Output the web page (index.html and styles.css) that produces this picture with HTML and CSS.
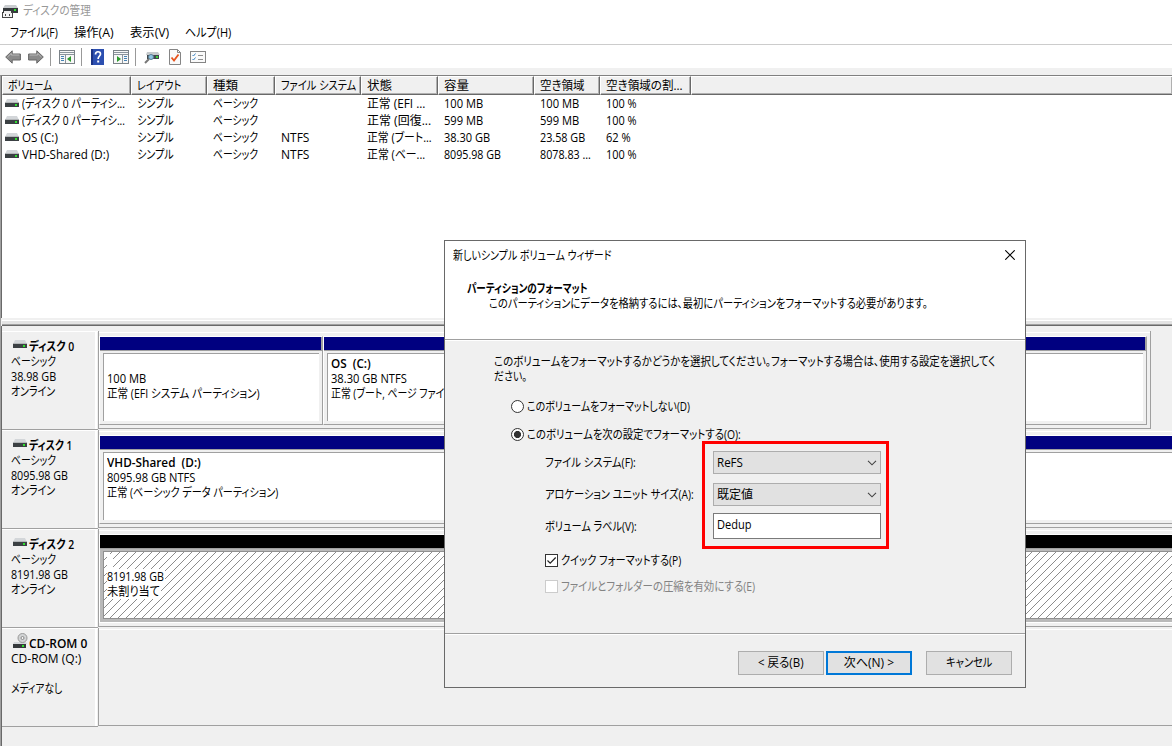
FILE: index.html
```
<!DOCTYPE html>
<html lang="ja">
<head>
    <meta charset="UTF-8">
    <title>ディスクの管理</title>
    <link rel="stylesheet" href="styles.css">
</head>
<body>
    <svg class="defs" width="0" height="0">
        <symbol id="drive" viewBox="0 0 14 8">
            <path d="M2 0h10l2 4H0z" fill="#d3d6d9"/>
            <rect y="3" width="14" height="1" fill="#b4b7b9"/>
            <rect y="4" width="14" height="4" fill="#3b4043"/>
            <rect x="10" y="5" width="2" height="2" fill="#2fe02f"/>
        </symbol>
        <symbol id="arrow" viewBox="0 0 16 14">
            <path d="M.7 7 7.2.8V4h8.2v6H7.2v3.2z" fill="#8b8b8b" stroke="#666"/>
            <path d="M2.5 7 6.3 3.4V5h8" fill="none" stroke="#b9b9b9"/>
        </symbol>
        <symbol id="chevron" viewBox="0 0 10 6">
            <path d="M1 .8l4 4 4-4" fill="none" stroke="#444" stroke-width="1.1"/>
        </symbol>
    </svg>

    <div class="titlebar">
        <svg width="16" height="16" viewBox="0 0 16 16">
            <path d="M3 2h11l2 3H1z" fill="#c9cccf"/>
            <rect x="1" y="5" width="15" height="5" fill="#35393c"/>
            <rect x="12" y="6" width="2" height="2" fill="#2fe02f"/>
            <rect x="0" y="9" width="11" height="6" fill="#444"/>
            <rect x="2" y="8" width="7" height="2" fill="#eee"/>
            <rect x="1" y="10" width="9" height="4" fill="#f4f4f4"/>
            <path d="M3 11h1v2H3zM7 11h1v2H7z" fill="#444"/>
        </svg>
        <span data-w="68">ディスクの管理</span>
    </div>
    <div class="menubar">
        <div class="menu menu-file"><span data-w="48">ファイル(F)</span></div>
        <div class="menu menu-action"><span data-w="40">操作(A)</span></div>
        <div class="menu menu-view"><span data-w="39">表示(V)</span></div>
        <div class="menu"><span data-w="46">ヘルプ(H)</span></div>
    </div>
    <div class="toolbar">
        <svg width="16" height="14"><use href="#arrow"/></svg>
        <svg class="forward" width="16" height="14"><use href="#arrow"/></svg>
        <i class="sep"></i>
        <svg class="tree" width="16" height="14" viewBox="0 0 16 14">
            <rect x=".5" y=".5" width="15" height="13" fill="#f7f7f7" stroke="#7b8288"/>
            <path d="M1 2.5h14M1 4.5h14M6.5 5v8" stroke="#8b949c"/>
            <path d="M2 6.5h3M2 8.5h3M2 10.5h3" stroke="#4682b4"/>
            <path d="M8 9l4-3v6z" fill="#2c9a2c"/>
        </svg>
        <i class="sep"></i>
        <svg class="help" width="13" height="16" viewBox="0 0 13 16">
            <rect width="13" height="16" fill="#2c4fb0"/>
            <rect width="2" height="16" fill="#1b3384"/>
            <path d="M4.5 5.5c0-3.6 5-3.6 5-.5 0 2-2.4 2.2-2.4 5" fill="none" stroke="#fff" stroke-width="1.7"/>
            <rect x="6.2" y="11.5" width="2" height="2" fill="#fff"/>
        </svg>
        <svg class="tree" width="16" height="14" viewBox="0 0 16 14">
            <rect x=".5" y=".5" width="15" height="13" fill="#f7f7f7" stroke="#7b8288"/>
            <path d="M1 2.5h14M1 4.5h14M9.5 5v8" stroke="#8b949c"/>
            <path d="M11 6.5h3M11 8.5h3M11 10.5h3" stroke="#4682b4"/>
            <path d="M4 6l4 3-4 3z" fill="#2c9a2c"/>
        </svg>
        <i class="sep"></i>
        <svg class="rescan" width="16" height="14" viewBox="0 0 16 14">
            <path d="M3 2h11l2 3H2z" fill="#c5c9cc"/>
            <rect x="3" y="5" width="12" height="4" fill="#41484c"/>
            <rect x="12" y="6" width="2" height="2" fill="#3cd03c"/>
            <circle cx="7" cy="7" r="2.5" fill="#8fc5e4" stroke="#5b7f96"/>
            <path d="M5 9l-4 4" stroke="#777" stroke-width="2"/>
        </svg>
        <svg class="page" width="12" height="16" viewBox="0 0 12 16">
            <path d="M.5.5h8l3 3v12H.5z" fill="#fafafa" stroke="#858585"/>
            <path d="M8.5.5v3h3" fill="none" stroke="#858585"/>
            <path d="M2.5 8.5l2.5 3 4.500-6" fill="none" stroke="#e8541d" stroke-width="1.8"/>
        </svg>
        <svg class="props" width="16" height="12" viewBox="0 0 16 12">
            <rect x=".5" y=".5" width="15" height="11" fill="#fafafa" stroke="#858585"/>
            <path d="M2.5 4l1 1 2-2.5M2.5 8l1 1 2-2.5" fill="none" stroke="#3e86c4"/>
            <path d="M8 4.5h5M8 8.5h5" stroke="#909090"/>
        </svg>
    </div>

    <div class="workspace">
        <div class="volumes">
            <div class="row head">
                <div class="c1"><span data-w="44">ボリューム</span></div>
                <div class="c2"><span data-w="44">レイアウト</span></div>
                <div class="c3"><span data-w="25">種類</span></div>
                <div class="c4"><span data-w="75">ファイル システム</span></div>
                <div class="c5"><span data-w="25">状態</span></div>
                <div class="c6"><span data-w="25">容量</span></div>
                <div class="c7"><span data-w="45">空き領域</span></div>
                <div class="c8"><span data-w="77">空き領域の割...</span></div>
                <div class="rest"></div>
            </div>
            <div class="rows">
                <div class="row">
                    <div class="c1"><svg width="14" height="8"><use href="#drive"/></svg><span data-w="103">(ディスク 0 パーティシ...</span></div>
                    <div class="c2"><span data-w="37">シンプル</span></div>
                    <div class="c3"><span data-w="45">ベーシック</span></div>
                    <div class="c4"></div>
                    <div class="c5"><span data-w="58">正常 (EFI ...</span></div>
                    <div class="c6"><span data-w="39">100 MB</span></div>
                    <div class="c7"><span data-w="39">100 MB</span></div>
                    <div class="c8"><span data-w="31">100 %</span></div>
                </div>
                <div class="row">
                    <div class="c1"><svg width="14" height="8"><use href="#drive"/></svg><span data-w="103">(ディスク 0 パーティシ...</span></div>
                    <div class="c2"><span data-w="37">シンプル</span></div>
                    <div class="c3"><span data-w="45">ベーシック</span></div>
                    <div class="c4"></div>
                    <div class="c5"><span data-w="64">正常 (回復...</span></div>
                    <div class="c6"><span data-w="39">599 MB</span></div>
                    <div class="c7"><span data-w="39">599 MB</span></div>
                    <div class="c8"><span data-w="31">100 %</span></div>
                </div>
                <div class="row">
                    <div class="c1"><svg width="14" height="8"><use href="#drive"/></svg><span data-w="36">OS (C:)</span></div>
                    <div class="c2"><span data-w="37">シンプル</span></div>
                    <div class="c3"><span data-w="45">ベーシック</span></div>
                    <div class="c4"><span data-w="28">NTFS</span></div>
                    <div class="c5"><span data-w="65">正常 (ブート...</span></div>
                    <div class="c6"><span data-w="46">38.30 GB</span></div>
                    <div class="c7"><span data-w="45">23.58 GB</span></div>
                    <div class="c8"><span data-w="25">62 %</span></div>
                </div>
                <div class="row">
                    <div class="c1"><svg width="14" height="8"><use href="#drive"/></svg><span data-w="87">VHD-Shared (D:)</span></div>
                    <div class="c2"><span data-w="37">シンプル</span></div>
                    <div class="c3"><span data-w="45">ベーシック</span></div>
                    <div class="c4"><span data-w="28">NTFS</span></div>
                    <div class="c5"><span data-w="58">正常 (ベー...</span></div>
                    <div class="c6"><span data-w="57">8095.98 GB</span></div>
                    <div class="c7"><span data-w="51">8078.83 ...</span></div>
                    <div class="c8"><span data-w="31">100 %</span></div>
                </div>
            </div>
        </div>
        <div class="splitter"></div>

        <div class="disks">
            <div class="disk">
                <div class="label">
                    <div class="name"><svg width="14" height="8"><use href="#drive"/></svg><b data-w="45">ディスク 0</b></div>
                    <div><span data-w="45">ベーシック</span></div>
                    <div><span data-w="45">38.98 GB</span></div>
                    <div><span data-w="44">オンライン</span></div>
                </div>
                <div class="frame closed">
                    <div class="part part-efi">
                        <div class="bar"></div>
                        <div class="body"><div class="box">
                            <div>&nbsp;</div>
                            <div><span data-w="39">100 MB</span></div>
                            <div><span data-w="153">正常 (EFI システム パーティション)</span></div>
                        </div></div>
                    </div>
                    <div class="part">
                        <div class="bar"></div>
                        <div class="body"><div class="box">
                            <div><b data-w="40">OS&nbsp; (C:)</b></div>
                            <div><span data-w="76">38.30 GB NTFS</span></div>
                            <div><span data-w="113">正常 (ブート, ページ ファイ</span></div>
                        </div></div>
                    </div>
                </div>
            </div>

            <div class="disk">
                <div class="label">
                    <div class="name"><svg width="14" height="8"><use href="#drive"/></svg><b data-w="43">ディスク 1</b></div>
                    <div><span data-w="45">ベーシック</span></div>
                    <div><span data-w="57">8095.98 GB</span></div>
                    <div><span data-w="44">オンライン</span></div>
                </div>
                <div class="frame">
                    <div class="part">
                        <div class="bar"></div>
                        <div class="body"><div class="box">
                            <div><b data-w="94">VHD-Shared&nbsp; (D:)</b></div>
                            <div><span data-w="88">8095.98 GB NTFS</span></div>
                            <div><span data-w="171">正常 (ベーシック データ パーティション)</span></div>
                        </div></div>
                    </div>
                </div>
            </div>

            <div class="disk">
                <div class="label">
                    <div class="name"><svg width="14" height="8"><use href="#drive"/></svg><b data-w="45">ディスク 2</b></div>
                    <div><span data-w="45">ベーシック</span></div>
                    <div><span data-w="57">8191.98 GB</span></div>
                    <div><span data-w="44">オンライン</span></div>
                </div>
                <div class="frame">
                    <div class="part free">
                        <div class="bar"></div>
                        <div class="body"><div class="box">
                            <svg class="hatch" width="100%" height="100%">
                                <pattern id="lines" width="8" height="8" patternUnits="userSpaceOnUse">
                                    <path d="M0 8L8 0" stroke="#8c8c8c" shape-rendering="crispEdges"/>
                                </pattern>
                                <rect width="100%" height="100%" fill="url(#lines)"/>
                            </svg>
                            <div class="note note-blank"></div>
                            <div class="note note-size"><span data-w="57">8191.98 GB</span></div>
                            <div class="note note-state"><span data-w="53">未割り当て</span></div>
                        </div></div>
                    </div>
                </div>
            </div>

            <div class="disk">
                <div class="label">
                    <div class="name cd">
                        <svg width="15" height="15" viewBox="0 0 15 15">
                            <path d="M1 9h12l1 2H0z" fill="#d3d6d9"/>
                            <rect y="11" width="13" height="4" fill="#35393c"/>
                            <rect x="9" y="12" width="2" height="2" fill="#2fe02f"/>
                            <circle cx="9.5" cy="5" r="4.5" fill="#d2d4d5" stroke="#999"/>
                            <circle cx="9.5" cy="5" r="1.5" fill="#f6f6f6" stroke="#888"/>
                        </svg>
                        <b data-w="58">CD-ROM 0</b>
                    </div>
                    <div><span data-w="70">CD-ROM (Q:)</span></div>
                    <div>&nbsp;</div>
                    <div><span data-w="51">メディアなし</span></div>
                </div>
                <div class="frame"></div>
            </div>
        </div>
    </div>

    <div class="dialog">
        <div class="dialog-head">
            <div class="dialog-title">
                <span data-w="159">新しいシンプル ボリューム ウィザード</span>
                <svg width="10" height="10" viewBox="0 0 10 10"><path d="M.3.3l9.4 9.4M9.7.3L.3 9.7" stroke="#000" stroke-width="1.1"/></svg>
            </div>
            <div class="heading"><b data-w="121">パーティションのフォーマット</b></div>
            <div class="subheading"><span data-w="439">このパーティションにデータを格納するには、最初にパーティションをフォーマットする必要があります。</span></div>
        </div>
        <div class="dialog-body">
            <div class="intro">
                <div><span data-w="501">このボリュームをフォーマットするかどうかを選択してください。フォーマットする場合は、使用する設定を選択してく</span></div>
                <div><span data-w="33">ださい。</span></div>
            </div>
            <div class="option"><i class="radio"></i><span data-w="163">このボリュームをフォーマットしない(D)</span></div>
            <div class="option"><i class="radio on"></i><span data-w="214">このボリュームを次の設定でフォーマットする(O):</span></div>
            <div class="settings">
                <div class="labels">
                    <div><span data-w="91">ファイル システム(F):</span></div>
                    <div><span data-w="149">アロケーション ユニット サイズ(A):</span></div>
                    <div><span data-w="92">ボリューム ラベル(V):</span></div>
                </div>
                <div class="fields">
                    <div class="select"><span data-w="26">ReFS</span><svg width="10" height="6"><use href="#chevron"/></svg></div>
                    <div class="select"><span data-w="36">既定値</span><svg width="10" height="6"><use href="#chevron"/></svg></div>
                    <div class="input"><span data-w="35">Dedup</span></div>
                </div>
            </div>
            <div class="check"><i class="box13"><svg width="11" height="11" viewBox="0 0 11 11"><path d="M1.5 5.5l2.7 2.7 5.500-5.700" fill="none" stroke="#222" stroke-width="1.2"/></svg></i><span data-w="120">クイック フォーマットする(P)</span></div>
            <div class="check disabled"><i class="box13"></i><span data-w="194">ファイルとフォルダーの圧縮を有効にする(E)</span></div>
        </div>
        <div class="dialog-foot">
            <div class="button"><span class="mid" data-w="46">&lt; 戻る(B)</span></div>
            <div class="button primary"><span class="mid" data-w="50">次へ(N) &gt;</span></div>
            <div class="button cancel"><span class="mid" data-w="46">キャンセル</span></div>
        </div>
    </div>

    <script src="fit.js"></script>
</body>
</html>
```

FILE: styles.css
```
* {
    box-sizing: border-box;
}

body {
    margin: 0;
    width: 1172px;
    height: 746px;
    overflow: hidden;
    position: relative;
    display: flex;
    flex-direction: column;
    background: #f0f0f0;
    color: #000;
    font-family: "Open Sans", "Noto Sans CJK JP", sans-serif;
    font-size: 12px;
    line-height: 15px;
    font-feature-settings: "palt";
    white-space: nowrap;
}

svg {
    display: block;
    flex: none;
}

.defs {
    position: absolute;
}

span,
b {
    display: inline-block;
    transform-origin: 0 50%;
}

b {
    font-weight: 600;
}

.mid {
    transform-origin: 50% 50%;
}

/* window chrome */
.titlebar {
    display: flex;
    align-items: center;
    gap: 5px;
    height: 22px;
    padding: 0 0 1px 2px;
    background: #fff;
    color: #999;
}

.menubar {
    display: flex;
    align-items: center;
    height: 23px;
    padding: 0 0 2px 10px;
    background: #fff;
    border-bottom: 1px solid #ccc;
}

.menu { width: 55px; }
.menu-file { width: 64px; }
.menu-action { width: 56px; }

.toolbar {
    display: flex;
    align-items: center;
    height: 23px;
    padding: 1px 0 0 5px;
    background: #fff;
}

.forward {
    margin-left: 7px;
    transform: scaleX(-1);
}

.sep {
    width: 1px;
    height: 18px;
    margin: 0 8px 0 6px;
    background: #999;
}

.tree + .sep { margin-right: 9px; }
.help { margin-right: 9px; }
.rescan { margin-left: -1px; }
.page { margin: 0 9px; }

/* volume list */
.workspace {
    flex: 1;
    margin-top: 7px;
    border-left: 1px solid #a0a0a0;
    border-top: 1px solid #808080;
    display: flex;
    flex-direction: column;
    min-height: 0;
    overflow: hidden;
}

.volumes {
    height: 242px;
    border-left: 1px solid #696969;
    background: #fff;
}

.row {
    display: flex;
    height: 17px;
    line-height: 17px;
}

.row > div {
    display: flex;
    align-items: center;
    flex: none;
    padding-left: 6px;
}

.row .c1 { width: 129px; }
.row .c2 { width: 76px; }
.row .c3 { width: 68px; }
.row .c4 { width: 86px; }
.row .c5 { width: 77px; }
.row .c6 { width: 96px; }
.row .c7 { width: 66px; }
.row .c8 { width: 91px; }

.rows .row .c1 {
    padding-left: 3px;
    gap: 3px;
}

.rows svg {
    margin-top: -1px;
}

.head {
    height: 19px;
    background: #f0f0f0;
}

.head > div {
    padding-left: 5px;
    border: 1px solid #fff;
    border-right: 1px solid #696969;
    border-bottom: 1px solid #696969;
    box-shadow: inset -1px -1px #b0b0b0;
}

.head .rest {
    flex: 1;
    border-right: 0;
}

.splitter {
    height: 8px;
    margin-left: 1px;
    border-top: 2px solid #f0f0f0;
    border-bottom: 1px solid #696969;
    background: linear-gradient(#fff 1px, #e3e3e3 1px, #e3e3e3 4px, #a0a0a0 4px);
}

/* disk map */
.disks {
    flex: 1;
    border-left: 1px solid #696969;
    padding-top: 5px;
}

.disk {
    display: flex;
    height: 99px;
}

.label {
    width: 96px;
    height: 99px;
    padding: 7px 0 0 9px;
    border-top: 1px solid #fff;
    border-bottom: 1px solid #a0a0a0;
    box-shadow: inset -1px 0 #f0f0f0, inset -3px 0 #fff;
}

.name {
    display: flex;
    align-items: center;
    gap: 2px;
    padding-left: 2px;
}

.name svg {
    margin-top: -5px;
}

.cd {
    gap: 1px;
    height: 15px;
}

.cd svg {
    margin-top: -6px;
}

.frame {
    flex: 1;
    display: flex;
    height: 98px;
    padding-top: 5px;
    border-left: 1px solid #a0a0a0;
    border-bottom: 1px solid #a0a0a0;
    box-shadow: inset 0 1px #f0f0f0, inset 0 2px #fff;
    overflow: hidden;
}

.closed {
    flex: none;
    width: 1053px;
    padding-right: 3px;
    border-right: 1px solid #a0a0a0;
}

.part {
    flex: 1;
    height: 89px;
    border: 1px solid #fff;
    border-right-color: #a0a0a0;
    border-bottom-color: #a0a0a0;
    display: flex;
    flex-direction: column;
    min-width: 0;
}

.frame:not(.closed) .part {
    flex: none;
    width: 1120px;
}

.part-efi {
    flex: none;
    width: 224px;
}

.bar {
    height: 14px;
    background: #000080;
    border-right: 1px solid #a0a0a0;
    border-bottom: 1px solid #a0a0a0;
}

.body {
    flex: 1;
    display: flex;
    padding: 2px 3px 3px;
}

.box {
    flex: 1;
    min-width: 0;
    padding: 2px 0 0 3px;
    border-left: 1px solid #a0a0a0;
    border-top: 1px solid #a0a0a0;
    background: #fff;
    position: relative;
    overflow: hidden;
}

.free {
    border-bottom-color: #fff;
}

.free .bar {
    background: #000;
}

.free .body {
    background: #b9b9b9;
}

.free .box {
    border: 1px solid #909090;
}

.hatch {
    position: absolute;
    left: 0;
    top: 0;
}

.note {
    position: relative;
    width: 58px;
    height: 15px;
    background: #fff;
}

.note-blank { width: 6px; }
.note-state { width: 54px; }

/* wizard */
.dialog {
    position: absolute;
    left: 444px;
    top: 240px;
    width: 582px;
    height: 448px;
    border: 1px solid #696969;
    background: #f0f0f0;
    display: flex;
    flex-direction: column;
}

.dialog-head {
    height: 99px;
    background: #fff;
    border-bottom: 1px solid #a0a0a0;
}

.dialog-title {
    display: flex;
    align-items: center;
    justify-content: space-between;
    height: 29px;
    padding: 0 10px 0 8px;
}

.dialog-title svg {
    margin-top: -2px;
}

.heading {
    margin-top: 11px;
    padding-left: 22px;
}

.subheading {
    padding-left: 44px;
}

.dialog-body {
    flex: 1;
    border-top: 1px solid #fff;
    padding: 13px 0 0 49px;
}

.intro {
    margin-bottom: 8px;
}

.option {
    display: flex;
    align-items: center;
    gap: 3px;
    height: 28px;
    padding-left: 17px;
}

.radio {
    flex: none;
    width: 13px;
    height: 13px;
    border: 1px solid #333;
    border-radius: 50%;
    background: #fff;
}

.radio.on {
    background: radial-gradient(circle, #333 3.2px, #fff 3.9px);
}

.settings {
    display: flex;
    padding-left: 51px;
    margin-top: -7px;
}

.labels {
    width: 157px;
    padding-top: 6px;
    line-height: 32px;
}

.fields {
    width: 187px;
    height: 108px;
    padding: 7px 5px 0 8px;
    border: 3px solid #f00;
}

.select,
.input {
    display: flex;
    align-items: center;
    justify-content: space-between;
    width: 168px;
    height: 23px;
    margin-bottom: 9px;
    padding: 0 3px;
    border: 1px solid #adadad;
    background: #e1e1e1;
}

.input {
    height: 26px;
    margin-top: -2px;
    padding-bottom: 4px;
    border-color: #7a7a7a;
    background: #fff;
}

.check {
    display: flex;
    align-items: center;
    gap: 3px;
    height: 26px;
    padding-left: 51px;
}

.settings + .check {
    margin-top: -2px;
}

.box13 {
    flex: none;
    width: 13px;
    height: 13px;
    border: 1px solid #333;
    background: #fff;
}

.disabled {
    color: #838383;
}

.disabled .box13 {
    border-color: #ccc;
}

.dialog-foot {
    display: flex;
    justify-content: flex-end;
    height: 54px;
    padding: 17px 13px 0 0;
    border-top: 1px solid #a0a0a0;
    box-shadow: inset 0 1px #fff;
}

.button {
    display: flex;
    align-items: center;
    justify-content: center;
    width: 86px;
    height: 24px;
    margin-right: 2px;
    padding-bottom: 1px;
    border: 1px solid #adadad;
    background: #e1e1e1;
}

.primary {
    border: 2px solid #0078d7;
}

.cancel {
    margin: 0 0 0 12px;
}
```

FILE: fit.js
```
// squeeze each label to its UI font width
document.querySelectorAll('[data-w]').forEach(el => {
    const scale = el.dataset.w / el.offsetWidth;
    el.style.transform = `scaleX(${scale})`;
});
```
